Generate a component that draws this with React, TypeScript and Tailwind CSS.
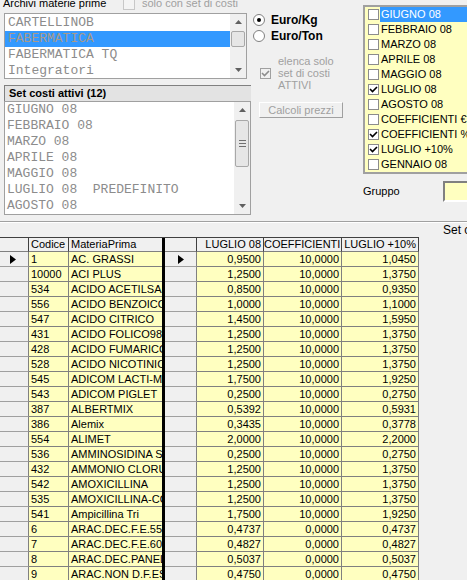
import React from "react";

type Row = [string, string, string, string, string];

const ROWS: Row[] = [
  ["1", "AC. GRASSI", "0,9500", "10,0000", "1,0450"],
  ["10000", "ACI PLUS", "1,2500", "10,0000", "1,3750"],
  ["534", "ACIDO ACETILSALICILICO", "0,8500", "10,0000", "0,9350"],
  ["556", "ACIDO BENZOICO", "1,0000", "10,0000", "1,1000"],
  ["547", "ACIDO CITRICO", "1,4500", "10,0000", "1,5950"],
  ["431", "ACIDO FOLICO98%", "1,2500", "10,0000", "1,3750"],
  ["428", "ACIDO FUMARICO", "1,2500", "10,0000", "1,3750"],
  ["528", "ACIDO NICOTINICO", "1,2500", "10,0000", "1,3750"],
  ["545", "ADICOM LACTI-MAX", "1,7500", "10,0000", "1,9250"],
  ["543", "ADICOM PIGLET", "0,2500", "10,0000", "0,2750"],
  ["387", "ALBERTMIX", "0,5392", "10,0000", "0,5931"],
  ["386", "Alemix", "0,3435", "10,0000", "0,3778"],
  ["554", "ALIMET", "2,0000", "10,0000", "2,2000"],
  ["536", "AMMINOSIDINA SOLF", "0,2500", "10,0000", "0,2750"],
  ["432", "AMMONIO CLORURO", "1,2500", "10,0000", "1,3750"],
  ["542", "AMOXICILLINA", "1,2500", "10,0000", "1,3750"],
  ["535", "AMOXICILLINA-COLI", "1,2500", "10,0000", "1,3750"],
  ["541", "Ampicillina Tri", "1,7500", "10,0000", "1,9250"],
  ["6", "ARAC.DEC.F.E.55", "0,4737", "0,0000", "0,4737"],
  ["7", "ARAC.DEC.F.E.60", "0,4827", "0,0000", "0,4827"],
  ["8", "ARAC.DEC.PANELLO", "0,5037", "0,0000", "0,5037"],
  ["9", "ARAC.NON D.F.ESP", "0,4750", "0,0000", "0,4750"],
];

const SETS = [
  "GIUGNO 08",
  "FEBBRAIO 08",
  "MARZO 08",
  "APRILE 08",
  "MAGGIO 08",
  "LUGLIO 08  PREDEFINITO",
  "AGOSTO 08",
];

const CHECKS: [string, boolean][] = [
  ["GIUGNO 08", false],
  ["FEBBRAIO 08", false],
  ["MARZO 08", false],
  ["APRILE 08", false],
  ["MAGGIO 08", false],
  ["LUGLIO 08", true],
  ["AGOSTO 08", false],
  ["COEFFICIENTI €", false],
  ["COEFFICIENTI %", true],
  ["LUGLIO +10%", true],
  ["GENNAIO 08", false],
];

function Arrow({ up }: { up?: boolean }) {
  return (
    <svg width="7" height="4" viewBox="0 0 7 4">
      <path d={up ? "M0 4L3.5 0L7 4Z" : "M0 0L3.5 4L7 0Z"} fill="#606060" />
    </svg>
  );
}

function Tick({ color = "#000" }: { color?: string }) {
  return (
    <svg width="9" height="9" viewBox="0 0 9 9">
      <path d="M1 4L3.5 6.5L8 2" fill="none" stroke={color} strokeWidth="1.6" />
    </svg>
  );
}

function Tri() {
  return (
    <svg width="6" height="9" viewBox="0 0 6 9">
      <path d="M0 0L6 4.5L0 9Z" fill="#000" />
    </svg>
  );
}

function LeftColumn() {
  return (
    <div className="ml-[4px] w-[247px] shrink-0">
      <div className="-mt-[3px] flex h-[13px] items-center whitespace-nowrap leading-[13px]">
        <span className="-ml-[1px] w-[120px]">Archivi materie prime</span>
        <span className="h-[12px] w-[12px] border border-[#c8c8c8] bg-[#f4f4f4]" />
        <span className="ml-[7px] text-[#a0a0a0]">solo con set di costi</span>
      </div>

      <div className="mt-[3px] flex h-[66px] w-[243px] border border-[#a0a0a0] bg-white">
        <div className="flex-1 overflow-hidden pt-[1px] text-[13px] leading-[16px] text-[#8c8c8c] [font-family:Liberation_Mono,monospace]">
          <div className="pl-[3px]">CARTELLINOB</div>
          <div className="bg-[#3399ff] pl-[3px] text-[#a89a8a]">FABERMATICA</div>
          <div className="pl-[3px]">FABERMATICA TQ</div>
          <div className="pl-[3px]">Integratori</div>
        </div>
        <div className="flex w-[16px] flex-col bg-[#f0f0f0]">
          <div className="flex h-[16px] items-center justify-center">
            <Arrow up />
          </div>
          <div className="mx-[1px] mt-[1px] h-[16px] rounded-[2px] border border-[#a8a8a8] bg-[#e6e6e6]" />
          <div className="flex-1" />
          <div className="flex h-[16px] items-center justify-center">
            <Arrow />
          </div>
        </div>
      </div>

      <div className="mt-[6px] h-[16px] border-t border-l border-[#808080] bg-[#e3e3e3] pl-[4px] text-[11px] font-bold leading-[15px]">
        Set costi attivi (12)
      </div>
      <div className="flex h-[114px] border border-[#a0a0a0] bg-white">
        <div className="flex-1 overflow-hidden pl-[2px] text-[13px] leading-[16px] text-[#8c8c8c] [font-family:Liberation_Mono,monospace]">
          {SETS.map((s) => (
            <div key={s} className="whitespace-pre">
              {s}
            </div>
          ))}
        </div>
        <div className="flex w-[16px] flex-col bg-[#f0f0f0]">
          <div className="flex h-[16px] items-center justify-center">
            <Arrow up />
          </div>
          <div className="mx-[1px] mt-[2px] flex h-[47px] flex-col items-center justify-center gap-[2px] rounded-[2px] border border-[#a8a8a8] bg-[#e6e6e6]">
            <span className="h-px w-[7px] bg-[#707070]" />
            <span className="h-px w-[7px] bg-[#707070]" />
            <span className="h-px w-[7px] bg-[#707070]" />
          </div>
          <div className="flex-1" />
          <div className="flex h-[16px] items-center justify-center">
            <Arrow />
          </div>
        </div>
      </div>
    </div>
  );
}

function Radio({ label, on }: { label: string; on?: boolean }) {
  return (
    <div className="flex h-[16px] items-center">
      <span className="flex h-[12px] w-[12px] items-center justify-center rounded-full border border-[#808080] bg-white">
        {on && <span className="h-[4px] w-[4px] rounded-full bg-black" />}
      </span>
      <span className="ml-[6px] text-[12px] font-bold">{label}</span>
    </div>
  );
}

function MiddleColumn() {
  return (
    <div className="ml-[2px] w-[110px] shrink-0 pt-[12px]">
      <Radio label="Euro/Kg" on />
      <Radio label="Euro/Ton" />
      <div className="mt-[11px] flex items-center">
        <span className="ml-[7px] flex h-[11px] w-[11px] items-center justify-center border border-[#a0a0a0] bg-[#f0f0f0]">
          <Tick color="#8c8c8c" />
        </span>
        <div className="ml-[7px] leading-[12px] text-[#a0a0a0]">
          <div>elenca solo</div>
          <div>set di costi</div>
          <div>ATTIVI</div>
        </div>
      </div>
      <div className="ml-[6px] mt-[11px] flex h-[16px] w-[84px] items-center justify-center border border-t-white border-l-white border-r-[#a0a0a0] border-b-[#a0a0a0] text-[#a0a0a0]">
        Calcoli prezzi
      </div>
    </div>
  );
}

function RightColumn() {
  return (
    <div className="w-[110px] shrink-0">
      <div className="mt-[5px] h-[169px] w-[110px] border-2 border-[#a0a0a0] bg-[#ffffc0] pl-[3px]">
        {CHECKS.map(([label, on], i) => (
          <div key={label} className="flex h-[15px] items-center whitespace-nowrap">
            <span className="flex h-[11px] w-[11px] shrink-0 items-center justify-center border border-[#8c8c8c] bg-white">
              {on && <Tick />}
            </span>
            <span
              className={
                i === 0
                  ? "ml-[1px] flex h-[15px] flex-1 items-center bg-[#3399ff] pl-[1px] text-white"
                  : "ml-[1px] pl-[1px]"
              }
            >
              {label}
            </span>
          </div>
        ))}
      </div>
      <div className="mt-[7px] flex h-[21px] items-center">
        <span className="w-[80px]">Gruppo</span>
        <span className="h-[21px] w-[30px] border-2 border-t-[#808080] border-l-[#808080] border-r-white border-b-white bg-[#ffffc0]" />
      </div>
    </div>
  );
}

function Grid() {
  const hd = "h-full border-r border-b border-r-[#404040] border-b-[#808080] bg-[#f0f0f0] overflow-hidden whitespace-nowrap leading-[13px]";
  const cell = "h-full border-r border-b border-[#808080] bg-[#ffffc0] overflow-hidden whitespace-nowrap leading-[14px]";
  const ind = "flex h-full items-center border-r border-b border-r-[#808080] border-b-[#a0a0a0] bg-[#f0f0f0]";
  return (
    <div className="w-[419px]">
      <div className="flex h-[15px] border-t border-[#404040]">
        <div className={`${hd} w-[29px]`} />
        <div className={`${hd} w-[40px] pl-[2px]`}>Codice</div>
        <div className={`${hd} w-[93px] border-r-0 pl-[2px]`}>MateriaPrima</div>
        <div className="h-full w-[3px] bg-black" />
        <div className={`${hd} w-[32px]`} />
        <div className={`${hd} w-[67px] pr-[2px] text-right`}>LUGLIO 08</div>
        <div className={`${hd} w-[78px] pr-[1px] text-right`}>COEFFICIENTI</div>
        <div className={`${hd} w-[77px] pr-[2px] text-right`}>LUGLIO +10%</div>
      </div>
      {ROWS.map((r, i) => (
        <div key={r[0]} className="flex h-[15px]">
          <div className={`${ind} w-[29px] pl-[10px]`}>{i === 0 && <Tri />}</div>
          <div className={`${cell} w-[40px] pl-[2px]`}>{r[0]}</div>
          <div className={`${cell} w-[93px] border-r-0 pl-[2px]`}>{r[1]}</div>
          <div className="h-full w-[3px] bg-black" />
          <div className={`${ind} w-[32px] pl-[13px]`}>{i === 0 && <Tri />}</div>
          <div className={`${cell} w-[67px] pr-[2px] text-right`}>{r[2]}</div>
          <div className={`${cell} w-[78px] pr-[2px] text-right`}>{r[3]}</div>
          <div className={`${cell} w-[77px] pr-[2px] text-right`}>{r[4]}</div>
        </div>
      ))}
    </div>
  );
}

export default function App() {
  return (
    <div className="relative h-[580px] w-[467px] overflow-hidden bg-[#f0f0f0] text-[11px] text-black [font-family:Liberation_Sans,Arial,sans-serif]">
      <div className="flex h-[221px]">
        <LeftColumn />
        <MiddleColumn />
        <RightColumn />
      </div>
      <div className="h-[2px] border-t border-[#a0a0a0] bg-white" />
      <div className="h-[14px] whitespace-nowrap pl-[443px] text-[12px] leading-[14px]">Set costi</div>
      <Grid />
    </div>
  );
}
